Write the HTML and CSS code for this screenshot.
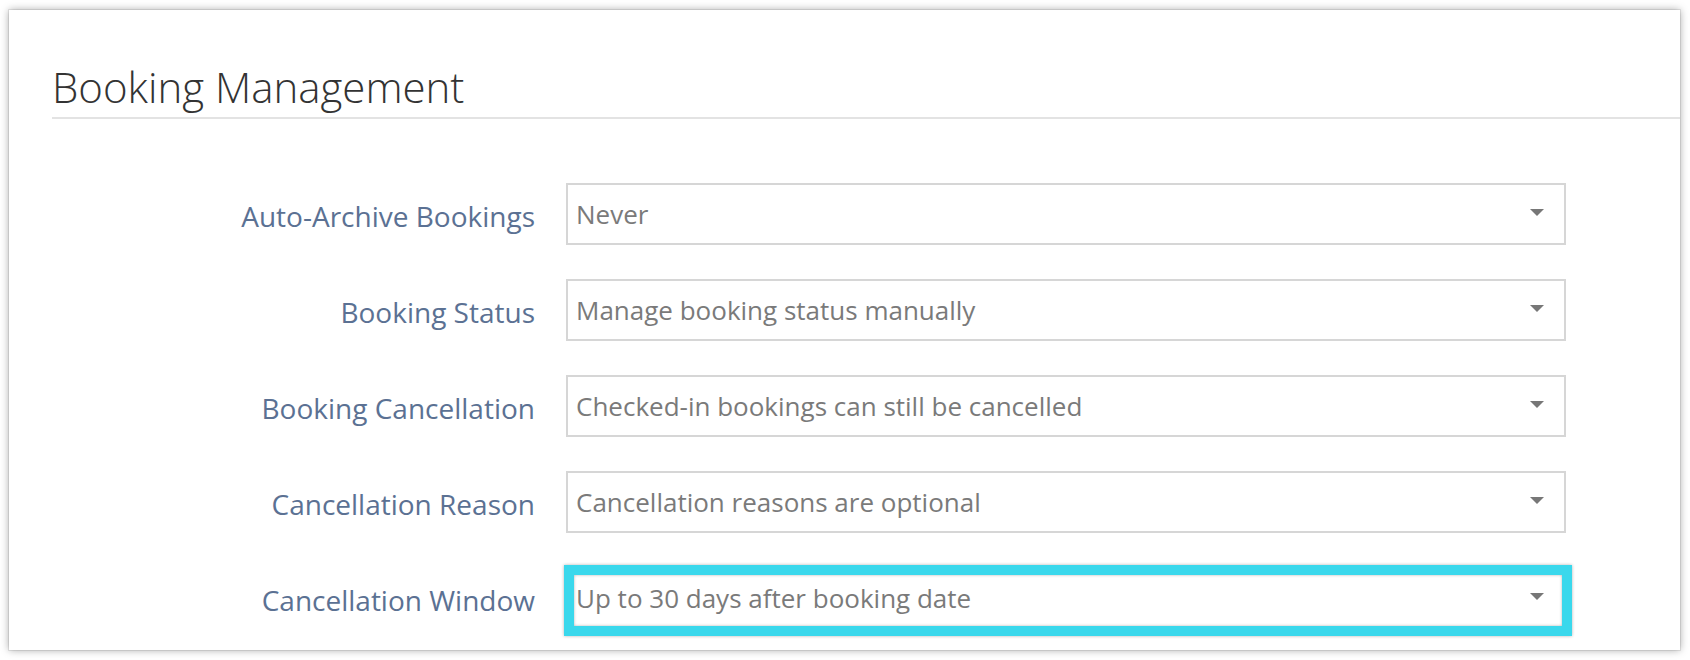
FILE: index.html
```html
<!DOCTYPE html>
<html lang="en">

<head>
    <meta charset="UTF-8">
    <meta name="viewport" content="width=device-width, initial-scale=1.0">
    <title>Booking Management</title>
    <link rel="stylesheet" href="styles.css">
</head>

<body>
    <div class="card">
        <h1>Booking Management</h1>

        <div class="settings">
            <label class="setting-label">Auto-Archive Bookings</label>
            <div class="select">
                <span>Never</span>
                <svg class="caret" width="14" height="7" viewBox="0 0 14 7"><polygon points="0,0 14,0 7,7" /></svg>
            </div>

            <label class="setting-label">Booking Status</label>
            <div class="select">
                <span>Manage booking status manually</span>
                <svg class="caret" width="14" height="7" viewBox="0 0 14 7"><polygon points="0,0 14,0 7,7" /></svg>
            </div>

            <label class="setting-label">Booking Cancellation</label>
            <div class="select">
                <span>Checked-in bookings can still be cancelled</span>
                <svg class="caret" width="14" height="7" viewBox="0 0 14 7"><polygon points="0,0 14,0 7,7" /></svg>
            </div>

            <label class="setting-label">Cancellation Reason</label>
            <div class="select">
                <span>Cancellation reasons are optional</span>
                <svg class="caret" width="14" height="7" viewBox="0 0 14 7"><polygon points="0,0 14,0 7,7" /></svg>
            </div>

            <label class="setting-label">Cancellation Window</label>
            <div class="select highlight">
                <span>Up to 30 days after booking date</span>
                <svg class="caret" width="14" height="7" viewBox="0 0 14 7"><polygon points="0,0 14,0 7,7" /></svg>
            </div>
        </div>
    </div>
</body>

</html>
```

FILE: styles.css
```css
body {
    font-family: "Open Sans", "Liberation Sans", sans-serif;
    background-color: #fff;
    margin: 0;
    padding: 10px 10px 10px 9px;
}

.card {
    background-color: #fff;
    padding: 52px 0 21px 43px;
    box-shadow: 0 0 0 1px rgba(0, 0, 0, 0.08), 0 0 8px rgba(0, 0, 0, 0.35);
}

h1 {
    margin: 0;
    font-size: 42px;
    font-weight: 300;
    line-height: 50px;
    color: #333;
    padding-bottom: 5px;
    border-bottom: 2px solid #e3e3e3;
}

.settings {
    display: grid;
    grid-template-columns: 483px 1000px;
    column-gap: 31px;
    row-gap: 34px;
    align-items: center;
    padding-top: 64px;
}

.setting-label {
    text-align: right;
    font-size: 28px;
    color: #5b7193;
    padding-top: 4px;
}

.select {
    position: relative;
    height: 62px;
    box-sizing: border-box;
    border: 2px solid #d6d6d6;
    padding: 0 20px 0 8px;
    display: flex;
    align-items: center;
    justify-content: space-between;
    font-size: 26px;
    color: #7a7a7a;
}

.caret {
    fill: #777;
    margin-bottom: 3px;
}

.highlight::after {
    content: "";
    position: absolute;
    left: -4px;
    top: -4px;
    right: -8px;
    bottom: -9px;
    border: 10px solid #3ad8ec;
    box-shadow: 0 0 3px rgba(0, 0, 0, 0.3), inset 0 0 3px rgba(0, 0, 0, 0.3);
}
```
